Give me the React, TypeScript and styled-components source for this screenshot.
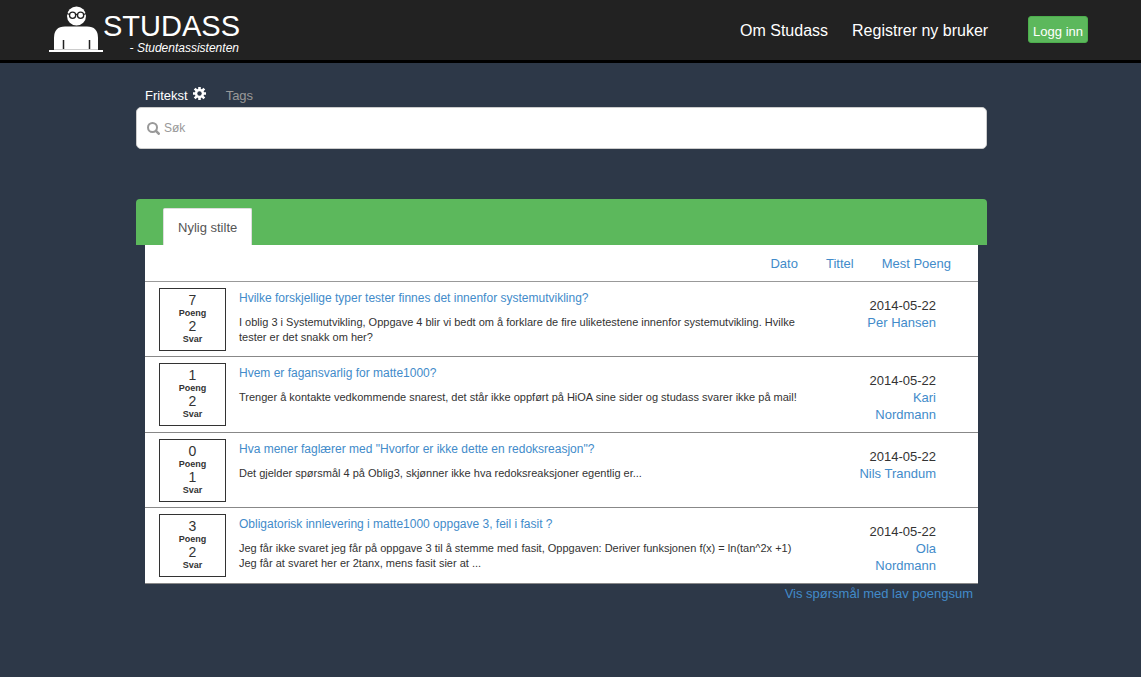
import React from "react";
import styled, { createGlobalStyle } from "styled-components";

const GlobalStyle = createGlobalStyle`
  *, *::before, *::after { box-sizing: border-box; }
  html, body { min-height: 100%; }
  body {
    margin: 0;
    background: #2d3848;
    color: #333;
    font-family: "Liberation Sans", Arial, Helvetica, sans-serif;
    font-size: 13px;
    line-height: 17px;
  }
  a { color: #428bca; text-decoration: none; }
`;

const Header = styled.header`
  display: flex;
  align-items: flex-start;
  justify-content: space-between;
  height: 63px;
  padding: 0 53px 0 49px;
  background: #222;
  border-bottom: 3px solid #000;
`;

const Brand = styled.a`
  display: flex;
  align-items: flex-start;
  padding-top: 6px;
  && { color: #fff; }
`;

const BrandText = styled.span`
  display: flex;
  flex-direction: column;
  align-items: flex-end;
  padding-top: 6px;
`;

const BrandName = styled.span`
  font-size: 29px;
  line-height: 29px;
`;

const Tagline = styled.span`
  padding-right: 1px;
  font-size: 12px;
  line-height: 14px;
  font-style: italic;
`;

const Nav = styled.nav`
  display: flex;
  align-items: flex-start;
  padding-top: 16px;
`;

const NavLink = styled.a`
  margin-right: 24px;
  padding-top: 5px;
  font-size: 16px;
  line-height: 20px;
  && { color: #fff; }
`;

const LoginButton = styled.button`
  height: 27px;
  margin-left: 16px;
  padding: 4px 4px 0;
  border: 1px solid #4cae4c;
  border-radius: 3px;
  background: #5cb85c;
  color: #fff;
  font: 13px/20px "Liberation Sans", Arial, sans-serif;
`;

const Main = styled.main`
  padding: 24px 154px 24px 136px;
`;

const SearchModes = styled.div`
  display: flex;
  align-items: flex-start;
  gap: 20px;
  padding-left: 9px;
  height: 20px;
`;

const SearchMode = styled.button<{ $active?: boolean }>`
  display: flex;
  align-items: flex-start;
  gap: 5px;
  padding: 0;
  border: 0;
  background: none;
  color: ${(p) => (p.$active ? "#fff" : "#999")};
  font: 13px/17px "Liberation Sans", Arial, sans-serif;
`;

const SearchBox = styled.label`
  display: flex;
  align-items: center;
  gap: 4px;
  height: 42px;
  padding: 0 10px;
  border: 1px solid #ccc;
  border-radius: 5px;
  background: #fff;
  color: #999;
`;

const SearchInput = styled.input`
  flex: 1;
  min-width: 0;
  padding: 0;
  border: 0;
  outline: 0;
  background: none;
  color: #555;
  font: 12px/17px "Liberation Sans", Arial, sans-serif;
  &::placeholder { color: #999; opacity: 1; }
`;

const Questions = styled.section`
  margin-top: 50px;
`;

const TabBar = styled.div`
  display: flex;
  align-items: flex-end;
  height: 46px;
  padding-left: 27px;
  border-radius: 4px 4px 0 0;
  background: #5cb85c;
`;

const Tab = styled.button`
  height: 37px;
  padding: 2px 14px 0;
  border: 1px solid #ddd;
  border-bottom: 0;
  border-radius: 2px 2px 0 0;
  background: #fff;
  color: #555;
  font: 13px/20px "Liberation Sans", Arial, sans-serif;
`;

const Panel = styled.div`
  margin: 0 9px;
  background: #fff;
`;

const SortBar = styled.div`
  display: flex;
  align-items: center;
  justify-content: flex-end;
  gap: 28px;
  height: 37px;
  padding-right: 27px;
  border-bottom: 1px solid #999;
`;

const QuestionList = styled.ul`
  margin: 0;
  padding: 0;
  list-style: none;
`;

const Question = styled.li`
  display: flex;
  align-items: flex-start;
  min-height: 75px;
  padding: 6px 42px 0 14px;
  border-bottom: 1px solid #888;
`;

const Score = styled.div`
  display: flex;
  flex-direction: column;
  justify-content: center;
  flex: none;
  width: 67px;
  height: 63px;
  border: 1px solid #333;
  text-align: center;
`;

const Count = styled.span`
  font-size: 14px;
  line-height: 13px;
`;

const Unit = styled.span`
  font-size: 9px;
  line-height: 13px;
  font-weight: bold;
`;

const Body = styled.div`
  flex: 1;
  min-width: 0;
  padding: 2px 48px 0 13px;
`;

const Title = styled.a`
  display: block;
  font-size: 12px;
  line-height: 17px;
`;

const Excerpt = styled.p`
  margin: 8px 0 0;
  font-size: 11px;
  line-height: 15px;
  white-space: pre-line;
`;

const Meta = styled.div`
  flex: none;
  width: 78px;
  padding: 9px 0 9px;
  text-align: right;
`;

const Footer = styled.div`
  padding: 1px 14px 0;
  text-align: right;
`;

const PersonLogo = () => (
  <svg width="54" height="46" viewBox="0 0 54 46" aria-hidden="true">
    <circle cx="27.500" cy="10" r="9.500" fill="#fff" />
    <g fill="none" stroke="#222" strokeWidth="1.300">
      <circle cx="23.600" cy="9.300" r="3.100" />
      <circle cx="31.600" cy="9.300" r="3.100" />
      <path d="M18 7.500l2.500 1M26.700 8.800q.9-.8 1.800 0M34.700 8.500l2.500-1" />
    </g>
    <path d="M5 44.500V32Q5 20.500 16 20.500H38Q49 20.500 49 32V44.500Z" fill="#fff" />
    <path d="M14.500 34V43M40.500 34V43" stroke="#222" strokeWidth="1.500" />
    <path d="M0 45H54" stroke="#fff" strokeWidth="2" />
    <path d="M5 43.500H49" stroke="#999" strokeWidth=".5" />
  </svg>
);

const CogIcon = () => (
  <svg width="13" height="13" viewBox="0 0 13 13" aria-hidden="true">
    <g stroke="#fff" strokeWidth="2.600">
      <path d="M6.500 0V13M0 6.500H13M1.700 1.700L11.300 11.300M11.300 1.700L1.700 11.300" />
    </g>
    <circle cx="6.500" cy="6.500" r="4.700" fill="#fff" />
    <circle cx="6.500" cy="6.500" r="2.200" fill="#2d3848" />
  </svg>
);

const SearchIcon = () => (
  <svg width="13" height="13" viewBox="0 0 13 13" fill="none" stroke="#999" aria-hidden="true">
    <circle cx="5.500" cy="5.500" r="4.500" strokeWidth="2" />
    <path d="M8.900 8.900L11.700 11.700" strokeWidth="2.600" strokeLinecap="round" />
  </svg>
);

const questions = [
  {
    points: 7,
    answers: 2,
    title: "Hvilke forskjellige typer tester finnes det innenfor systemutvikling?",
    excerpt:
      "I oblig 3 i Systemutvikling, Oppgave 4 blir vi bedt om å forklare de fire uliketestene innenfor systemutvikling. Hvilke tester er det snakk om her?",
    date: "2014-05-22",
    author: "Per Hansen",
  },
  {
    points: 1,
    answers: 2,
    title: "Hvem er fagansvarlig for matte1000?",
    excerpt:
      "Trenger å kontakte vedkommende snarest, det står ikke oppført på HiOA sine sider og studass svarer ikke på mail!",
    date: "2014-05-22",
    author: "Kari Nordmann",
  },
  {
    points: 0,
    answers: 1,
    title: 'Hva mener faglærer med "Hvorfor er ikke dette en redoksreasjon"?',
    excerpt: "Det gjelder spørsmål 4 på Oblig3, skjønner ikke hva redoksreaksjoner egentlig er...",
    date: "2014-05-22",
    author: "Nils Trandum",
  },
  {
    points: 3,
    answers: 2,
    title: "Obligatorisk innlevering i matte1000 oppgave 3, feil i fasit ?",
    excerpt:
      "Jeg får ikke svaret jeg får på oppgave 3 til å stemme med fasit, Oppgaven: Deriver funksjonen f(x) = ln(tan^2x +1)\nJeg får at svaret her er 2tanx, mens fasit sier at ...",
    date: "2014-05-22",
    author: "Ola Nordmann",
  },
];

export default function App() {
  return (
    <>
      <GlobalStyle />
      <Header>
        <Brand href="#">
          <PersonLogo />
          <BrandText>
            <BrandName>STUDASS</BrandName>
            <Tagline>- Studentassistenten</Tagline>
          </BrandText>
        </Brand>
        <Nav>
          <NavLink href="#om">Om Studass</NavLink>
          <NavLink href="#registrer">Registrer ny bruker</NavLink>
          <LoginButton type="button">Logg inn</LoginButton>
        </Nav>
      </Header>
      <Main>
        <SearchModes>
          <SearchMode type="button" $active>
            Fritekst <CogIcon />
          </SearchMode>
          <SearchMode type="button">Tags</SearchMode>
        </SearchModes>
        <SearchBox>
          <SearchIcon />
          <SearchInput type="text" placeholder="Søk" aria-label="Søk" />
        </SearchBox>
        <Questions>
          <TabBar>
            <Tab type="button">Nylig stilte</Tab>
          </TabBar>
          <Panel>
            <SortBar>
              <a href="#dato">Dato</a>
              <a href="#tittel">Tittel</a>
              <a href="#poeng">Mest Poeng</a>
            </SortBar>
            <QuestionList>
              {questions.map((q) => (
                <Question key={q.title}>
                  <Score>
                    <Count>{q.points}</Count>
                    <Unit>Poeng</Unit>
                    <Count>{q.answers}</Count>
                    <Unit>Svar</Unit>
                  </Score>
                  <Body>
                    <Title href="#sporsmal">{q.title}</Title>
                    <Excerpt>{q.excerpt}</Excerpt>
                  </Body>
                  <Meta>
                    <div>{q.date}</div>
                    <a href="#bruker">{q.author}</a>
                  </Meta>
                </Question>
              ))}
            </QuestionList>
          </Panel>
          <Footer>
            <a href="#lav-poengsum">Vis spørsmål med lav poengsum</a>
          </Footer>
        </Questions>
      </Main>
    </>
  );
}
